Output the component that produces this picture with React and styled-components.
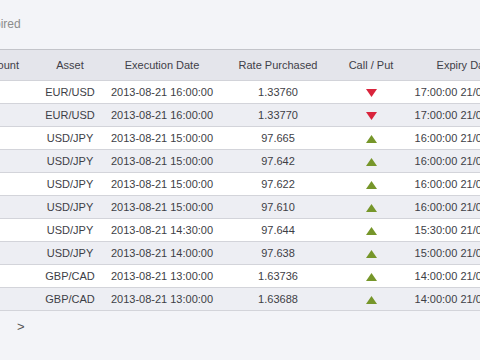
import styled, { createGlobalStyle } from "styled-components";

const GlobalStyle = createGlobalStyle`
  html, body {
    margin: 0;
    padding: 0;
    background: #f3f4f8;
    overflow: hidden;
  }
  body {
    font-family: "Liberation Sans", Arial, sans-serif;
  }
`;

const trades = [
    {asset: "EUR/USD", exec: "2013-08-21 16:00:00", rate: "1.33760", dir: "put", expiry: "17:00:00 21/08/2013"},
    {asset: "EUR/USD", exec: "2013-08-21 16:00:00", rate: "1.33770", dir: "put", expiry: "17:00:00 21/08/2013"},
    {asset: "USD/JPY", exec: "2013-08-21 15:00:00", rate: "97.665", dir: "call", expiry: "16:00:00 21/08/2013"},
    {asset: "USD/JPY", exec: "2013-08-21 15:00:00", rate: "97.642", dir: "call", expiry: "16:00:00 21/08/2013"},
    {asset: "USD/JPY", exec: "2013-08-21 15:00:00", rate: "97.622", dir: "call", expiry: "16:00:00 21/08/2013"},
    {asset: "USD/JPY", exec: "2013-08-21 15:00:00", rate: "97.610", dir: "call", expiry: "16:00:00 21/08/2013"},
    {asset: "USD/JPY", exec: "2013-08-21 14:30:00", rate: "97.644", dir: "call", expiry: "15:30:00 21/08/2013"},
    {asset: "USD/JPY", exec: "2013-08-21 14:00:00", rate: "97.638", dir: "call", expiry: "15:00:00 21/08/2013"},
    {asset: "GBP/CAD", exec: "2013-08-21 13:00:00", rate: "1.63736", dir: "call", expiry: "14:00:00 21/08/2013"},
    {asset: "GBP/CAD", exec: "2013-08-21 13:00:00", rate: "1.63688", dir: "call", expiry: "14:00:00 21/08/2013"},
];

function Arrow({dir}) {
    if (dir === "put") {
        return (
            <svg width="11" height="8" viewBox="0 0 11 8">
                <polygon points="0,0 11,0 5.5,8" fill="#d9243c"/>
            </svg>
        );
    }
    return (
        <svg width="11" height="8" viewBox="0 0 11 8">
            <polygon points="5.5,0 11,8 0,8" fill="#76962a"/>
        </svg>
    );
}

function App() {
    return (
        <Page>
            <GlobalStyle/>
            <TabLabel>Expired</TabLabel>
            <Table>
                <colgroup>
                    <col style={{width: 80}}/>
                    <col style={{width: 60}}/>
                    <col style={{width: 124}}/>
                    <col style={{width: 108}}/>
                    <col style={{width: 78}}/>
                    <col style={{width: 110}}/>
                </colgroup>
                <thead>
                    <tr>
                        <Th>Amount</Th>
                        <Th>Asset</Th>
                        <Th>Execution Date</Th>
                        <Th>Rate Purchased</Th>
                        <Th>Call / Put</Th>
                        <Th>Expiry Date</Th>
                    </tr>
                </thead>
                <tbody>
                    {trades.map((t, i) => (
                        <Row key={i} $alt={i % 2 === 1}>
                            <Td/>
                            <Td>{t.asset}</Td>
                            <Td>{t.exec}</Td>
                            <Td>{t.rate}</Td>
                            <Td><Arrow dir={t.dir}/></Td>
                            <Td>{t.expiry}</Td>
                        </Row>
                    ))}
                </tbody>
            </Table>
            <Pager>
                <PageLink>&lt;</PageLink>
                <PageLink>&gt;</PageLink>
            </Pager>
        </Page>
    );
}

export default App;

const Page = styled.div`
  margin-left: -40px;
  width: 600px;
`;

const TabLabel = styled.div`
  height: 49px;
  box-sizing: border-box;
  padding: 17px 0 0 20px;
  font-size: 12px;
  color: #8c8c8c;
`;

const Table = styled.table`
  width: 560px;
  table-layout: fixed;
  border-collapse: collapse;
  font-size: 11px;
`;

const Th = styled.th`
  height: 30px;
  padding: 0;
  background: #e4e5eb;
  border-top: 1px solid #c3c4ca;
  border-bottom: 1px solid #d2d3d9;
  font-weight: normal;
  color: #3f4048;
  text-align: center;
  white-space: nowrap;
`;

const Row = styled.tr`
  background: ${p => (p.$alt ? "#edeef3" : "#ffffff")};
`;

const Td = styled.td`
  height: 22px;
  padding: 0;
  border-bottom: 1px solid #d3d4da;
  color: #3d3e46;
  text-align: center;
  white-space: nowrap;
  vertical-align: middle;

  svg {
    display: block;
    margin: 1px auto 0;
  }
`;

const Pager = styled.div`
  display: flex;
  gap: 44px;
  padding: 8px 0 0 3px;
  font-size: 13px;
  color: #555;
`;

const PageLink = styled.span`
  width: 10px;
`;
